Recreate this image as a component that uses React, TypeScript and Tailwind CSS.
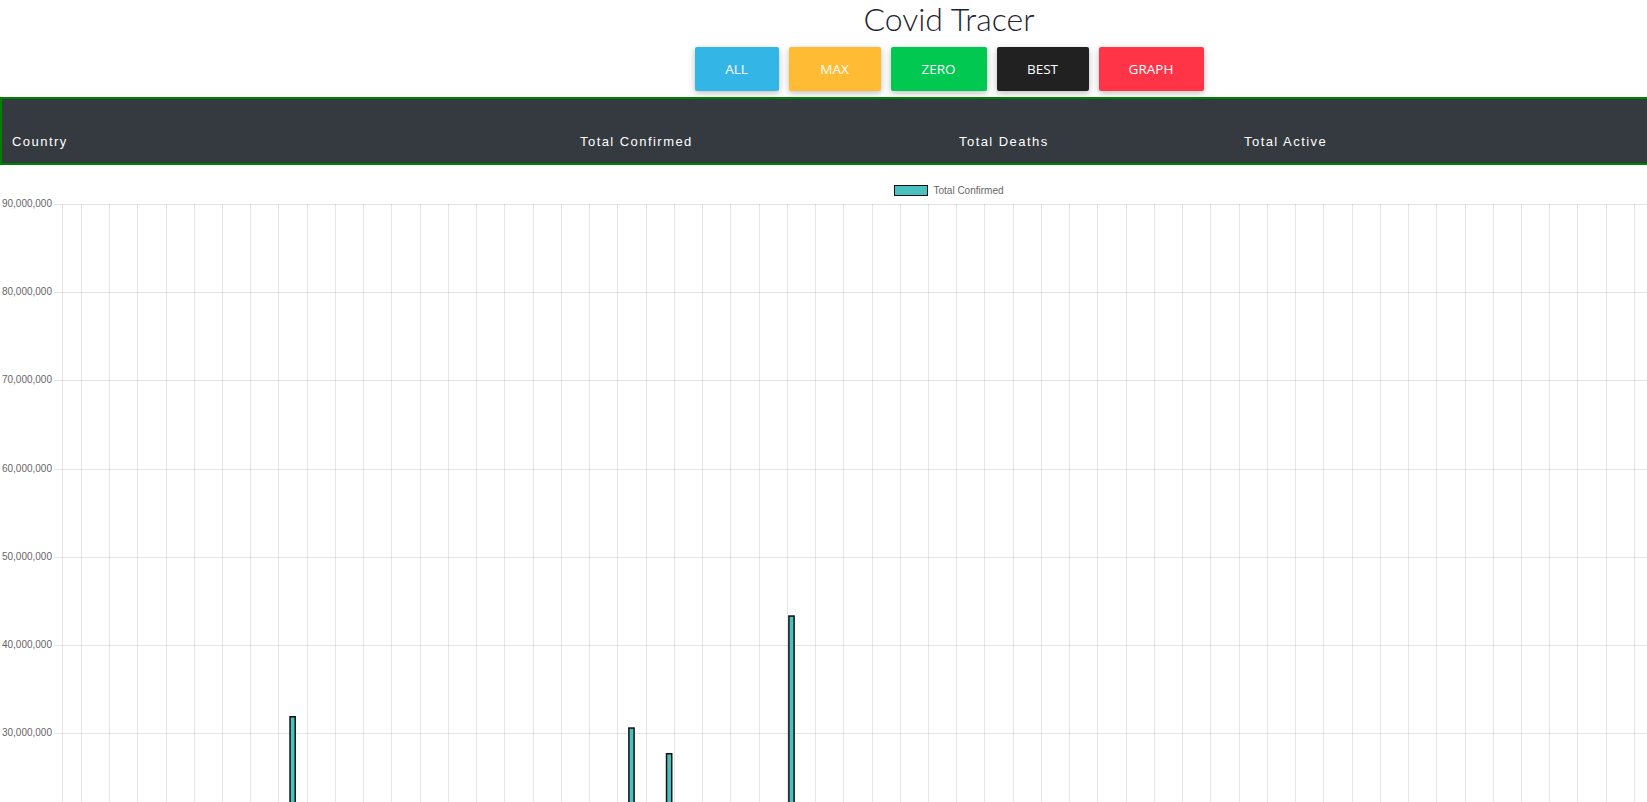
import React from "react";

const PAGE_W = 1898;
const CAT_W = 9.413;
const AXIS_X = 62;
const TOP_Y = 8;
const STEP = 88.2;

const buttons = [
  { label: "ALL", w: "w-[84px]", bg: "bg-[#33b5e5]" },
  { label: "MAX", w: "w-[92px]", bg: "bg-[#ffbb33]" },
  { label: "ZERO", w: "w-[96px]", bg: "bg-[#00c851]" },
  { label: "BEST", w: "w-[92px]", bg: "bg-[#212121]" },
  { label: "GRAPH", w: "w-[105px]", bg: "bg-[#ff3547]" },
];

const yLabels = [
  "90,000,000",
  "80,000,000",
  "70,000,000",
  "60,000,000",
  "50,000,000",
  "40,000,000",
  "30,000,000",
];

// category index -> top y (svg coords)
const bars: { i: number; top: number }[] = [
  { i: 24, top: 520 },
  { i: 60, top: 531.3 },
  { i: 64, top: 557 },
  { i: 77, top: 419.3 },
];

function Chart() {
  const vLines: number[] = [AXIS_X];
  for (let k = 0; ; k++) {
    const x = AXIS_X + CAT_W * (2 + 3 * k);
    if (x > PAGE_W - 8) break;
    vLines.push(x);
  }
  const H = 606;
  return (
    <svg width={PAGE_W} height={H} className="block">
      {[0, 1, 2, 3, 4, 5, 6].map((k) => {
        const y = Math.round(TOP_Y + STEP * k) + 0.5;
        return (
          <line key={k} x1={54} x2={PAGE_W - 8} y1={y} y2={y} stroke="rgba(0,0,0,0.1)" strokeWidth={1} />
        );
      })}
      {yLabels.map((l, k) => {
        const y = Math.round(TOP_Y + STEP * k) + 0.5;
        return (
          <text
            key={l}
            x={52}
            y={y}
            textAnchor="end"
            dominantBaseline="middle"
            fontSize={10}
            fill="#666"
            fontFamily="'Liberation Sans', Arial, sans-serif"
          >
            {l}
          </text>
        );
      })}
      {vLines.map((x, idx) => {
        const xx = Math.round(x) + 0.5;
        return (
          <line key={idx} x1={xx} x2={xx} y1={TOP_Y} y2={H} stroke="rgba(0,0,0,0.1)" strokeWidth={1} />
        );
      })}
      {bars.map((b) => {
        const cx = AXIS_X + CAT_W * (b.i + 0.5);
        return (
          <rect
            key={b.i}
            x={cx - 2.6}
            y={b.top + 0.75}
            width={5.2}
            height={H}
            fill="#4bc0c0"
            stroke="#111"
            strokeWidth={1.5}
          />
        );
      })}
    </svg>
  );
}

export default function App() {
  return (
    <div className="w-[1647px] h-[802px] overflow-hidden bg-white">
      <div className="w-[1898px] flex flex-col">
        <div
          className="text-center text-[32px] leading-[38px] text-[#1f2433] font-light"
          style={{ fontFamily: "Lato, 'Open Sans', sans-serif" }}
        >
          Covid Tracer
        </div>
        <div className="mt-[9px] flex justify-center gap-[10px]">
          {buttons.map((b) => (
            <button
              key={b.label}
              className={`${b.w} ${b.bg} h-[44px] rounded-[2px] text-white text-[13.5px] uppercase shadow-[0_2px_5px_0_rgba(0,0,0,0.16),0_2px_10px_0_rgba(0,0,0,0.12)] font-['Open_Sans',sans-serif]`}
            >
              {b.label}
            </button>
          ))}
        </div>
        <div className="mt-[6px] h-[68px] border-2 border-[#008000] bg-[#343a40] grid grid-cols-[568px_379px_285px_1fr] items-end pb-[11px] text-white text-[13px] leading-[20px] tracking-[1.45px] font-['Liberation_Sans',Arial,sans-serif]">
          <div className="pl-[10px]">Country</div>
          <div className="pl-[10px]">Total Confirmed</div>
          <div className="pl-[10px]">Total Deaths</div>
          <div className="pl-[10px]">Total Active</div>
        </div>
        <div className="pt-[20px] flex justify-center items-center gap-[5px] h-[31px] box-border">
          <div className="w-[34px] h-[11px] bg-[#4bc0c0] border-[1.5px] border-[#111]" />
          <span className="text-[10px] leading-[11px] text-[#666] font-['Liberation_Sans',Arial,sans-serif]">
            Total Confirmed
          </span>
        </div>
        <Chart />
      </div>
    </div>
  );
}
